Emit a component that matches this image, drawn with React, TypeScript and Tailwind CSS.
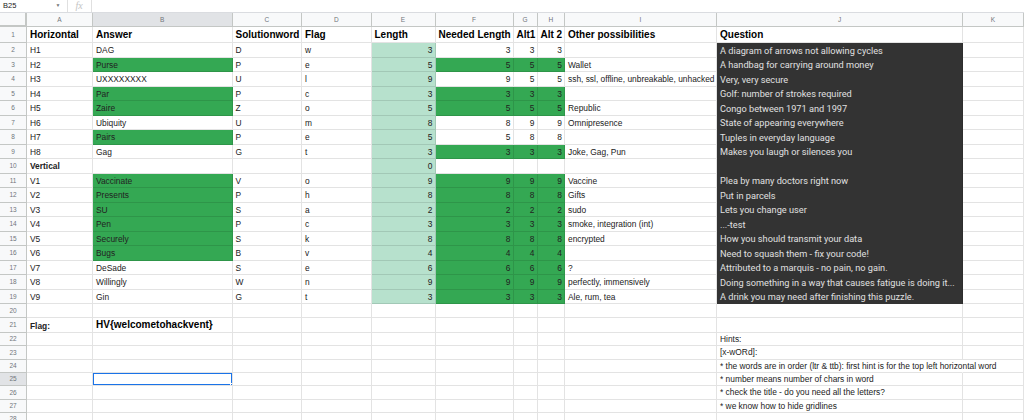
import React from "react";

const COLS = "grid grid-cols-[27px_66px_139.5px_69.5px_69.5px_64px_78px_24px_27.5px_152px_246px_1fr]";
const LETTERS = ["A", "B", "C", "D", "E", "F", "G", "H", "I", "J", "K"];

type Row = {
  a: string;
  b: string;
  c: string;
  d: string;
  e: string;
  f: string;
  g: string;
  h: string;
  i: string;
  j: string;
  gb?: boolean;
  gf?: boolean;
  bold?: boolean;
};

const ROWS: Row[] = [
  { a: "H1", b: "DAG", c: "D", d: "w", e: "3", f: "3", g: "3", h: "3", i: "", j: "A diagram of arrows not allowing cycles" },
  { a: "H2", b: "Purse", c: "P", d: "e", e: "5", f: "5", g: "5", h: "5", i: "Wallet", j: "A handbag for carrying around money", gb: true, gf: true },
  { a: "H3", b: "UXXXXXXXX", c: "U", d: "l", e: "9", f: "9", g: "5", h: "5", i: "ssh, ssl, offline, unbreakable, unhacked", j: "Very, very secure" },
  { a: "H4", b: "Par", c: "P", d: "c", e: "3", f: "3", g: "3", h: "3", i: "", j: "Golf: number of strokes required", gb: true, gf: true },
  { a: "H5", b: "Zaire", c: "Z", d: "o", e: "5", f: "5", g: "5", h: "5", i: "Republic", j: "Congo between 1971 and 1997", gb: true, gf: true },
  { a: "H6", b: "Ubiquity", c: "U", d: "m", e: "8", f: "8", g: "9", h: "9", i: "Omnipresence", j: "State of appearing everywhere" },
  { a: "H7", b: "Pairs", c: "P", d: "e", e: "5", f: "5", g: "8", h: "8", i: "", j: "Tuples in everyday language", gb: true },
  { a: "H8", b: "Gag", c: "G", d: "t", e: "3", f: "3", g: "3", h: "3", i: "Joke, Gag, Pun", j: "Makes you laugh or silences you", gf: true },
  { a: "Vertical", b: "", c: "", d: "", e: "0", f: "", g: "", h: "", i: "", j: "", bold: true },
  { a: "V1", b: "Vaccinate", c: "V", d: "o", e: "9", f: "9", g: "9", h: "9", i: "Vaccine", j: "Plea by many doctors right now", gb: true, gf: true },
  { a: "V2", b: "Presents", c: "P", d: "h", e: "8", f: "8", g: "8", h: "8", i: "Gifts", j: "Put in parcels", gb: true, gf: true },
  { a: "V3", b: "SU", c: "S", d: "a", e: "2", f: "2", g: "2", h: "2", i: "sudo", j: "Lets you change user", gb: true, gf: true },
  { a: "V4", b: "Pen", c: "P", d: "c", e: "3", f: "3", g: "3", h: "3", i: "smoke, integration (int)", j: "...-test", gb: true, gf: true },
  { a: "V5", b: "Securely", c: "S", d: "k", e: "8", f: "8", g: "8", h: "8", i: "encrypted", j: "How you should transmit your data", gb: true, gf: true },
  { a: "V6", b: "Bugs", c: "B", d: "v", e: "4", f: "4", g: "4", h: "4", i: "", j: "Need to squash them - fix your code!", gb: true, gf: true },
  { a: "V7", b: "DeSade", c: "S", d: "e", e: "6", f: "6", g: "6", h: "6", i: "?", j: "Attributed to a marquis - no pain, no gain.", gf: true },
  { a: "V8", b: "Willingly", c: "W", d: "n", e: "9", f: "9", g: "9", h: "9", i: "perfectly, immensively", j: "Doing something in a way that causes fatigue is doing it...", gf: true },
  { a: "V9", b: "Gin", c: "G", d: "t", e: "3", f: "3", g: "3", h: "3", i: "Ale, rum, tea", j: "A drink you may need after finishing this puzzle.", gf: true },
];

const HINTS = [
  "Hints:",
  "[x-wORd]:",
  "* the words are in order (ltr & ttb): first hint is for the top left horizontal word",
  "* number means number of chars in word",
  "* check the title - do you need all the letters?",
  "* we know how to hide gridlines",
  "",
];

const cell = "border-r border-b border-black/[0.11] whitespace-nowrap flex items-end pb-[2px] leading-none text-[8.4px] text-[#222]";
const txt = `${cell} overflow-hidden px-[3px]`;
const num = `${cell} overflow-hidden justify-end px-[2px]`;
const green = "bg-[#34a853]";

function RowNum({ n, active }: { n: number; active?: boolean }) {
  return (
    <div
      className={`border-r border-b border-[#c4c7c5] flex items-center justify-center text-[6.5px] text-[#70757a] ${
        active ? "bg-[#e1e3e6]" : "bg-[#f8f9fa]"
      }`}
    >
      {n}
    </div>
  );
}

function EmptyRow({ n, h, hint }: { n: number; h: string; hint: string }) {
  const wide = hint.length > 60;
  return (
    <div className={`${COLS} ${h}`}>
      <RowNum n={n} active={n === 25} />
      {Array.from({ length: 9 }).map((_, k) => (
        <div key={k} className={`${txt} relative`}>
          {n === 25 && k === 1 && (
            <div className="absolute inset-[-1px] border-2 border-[#1a73e8]">
              <div className="absolute -right-[4px] -bottom-[4px] w-[5px] h-[5px] bg-[#1a73e8] border border-white" />
            </div>
          )}
        </div>
      ))}
      <div className={`${cell} px-[3px] relative z-10 ${wide ? "border-r-transparent" : ""}`}>{hint}</div>
      <div className={txt} />
    </div>
  );
}

export default function App() {
  return (
    <div className="w-[1024px] h-[420px] overflow-hidden bg-white font-['Liberation_Sans',Arial,sans-serif] select-none">
      {/* formula bar */}
      <div className="flex h-[13px] border-b border-[#dadce0] items-center text-[7.5px] text-[#222]">
        <div className="w-[67.5px] h-full flex items-center justify-between pl-[3px] pr-[6px] border-r border-[#e0e0e0]">
          <span>B25</span>
          <span className="text-[5px] text-[#777]">▼</span>
        </div>
        <div className="w-[24px] h-full flex items-center justify-center border-r border-[#e0e0e0]">
          <span className="font-['Liberation_Serif',serif] italic text-[10px] text-[#c4c4c4] leading-none">fx</span>
        </div>
        <div className="flex-1" />
      </div>

      {/* column letters */}
      <div className={`${COLS} h-[14px] bg-[#f8f9fa]`}>
        <div className="border-r-2 border-b-2 border-[#c4c7c5]" />
        {LETTERS.map((l) => (
          <div
            key={l}
            className={`border-r border-b border-[#c4c7c5] flex items-center justify-center text-[6.5px] text-[#70757a] ${
              l === "B" ? "bg-[#e1e3e6]" : ""
            }`}
          >
            {l}
          </div>
        ))}
      </div>

      {/* row 1 headers */}
      <div className={`${COLS} h-[16.3px]`}>
        <RowNum n={1} />
        {["Horizontal", "Answer", "Solutionword", "Flag", "Length", "Needed Length", "Alt1", "Alt 2", "Other possibilities", "Question", ""].map(
          (t, k) => (
            <div key={k} className={`${txt} !text-[10px] font-bold !text-black`}>
              {t}
            </div>
          )
        )}
      </div>

      {ROWS.map((r, idx) => (
        <div key={idx} className={`${COLS} h-[14.5px]`}>
          <RowNum n={idx + 2} />
          <div className={`${txt} ${r.bold ? "font-bold" : ""}`}>{r.a}</div>
          <div className={`${txt} ${r.gb ? green : ""}`}>{r.b}</div>
          <div className={txt}>{r.c}</div>
          <div className={txt}>{r.d}</div>
          <div className={`${num} bg-[#b7e1cd]`}>{r.e}</div>
          <div className={`${num} ${r.gf ? green : ""}`}>{r.f}</div>
          <div className={`${num} ${r.gf ? green : ""}`}>{r.g}</div>
          <div className={`${num} ${r.gf ? green : ""}`}>{r.h}</div>
          <div className={txt}>{r.i}</div>
          <div className="bg-[#333333] border-b border-[#333333] border-r border-r-black/[0.11] flex items-end pb-[2px] px-[3px] overflow-hidden whitespace-nowrap leading-none text-[9.2px] text-[#e0e0e0] font-['Roboto',sans-serif]">
            {r.j}
          </div>
          <div className={txt} />
        </div>
      ))}

      <EmptyRow n={20} h="h-[13.3px]" hint="" />

      {/* flag row */}
      <div className={`${COLS} h-[15.4px]`}>
        <RowNum n={21} />
        <div className={`${txt} font-bold`}>Flag:</div>
        <div className={`${txt} !text-[10px] font-bold !text-black`}>HV{"{"}welcometohackvent{"}"}</div>
        {Array.from({ length: 9 }).map((_, k) => (
          <div key={k} className={txt} />
        ))}
      </div>

      {HINTS.map((h, k) => (
        <EmptyRow key={k} n={22 + k} h="h-[13.33px]" hint={h} />
      ))}
    </div>
  );
}
